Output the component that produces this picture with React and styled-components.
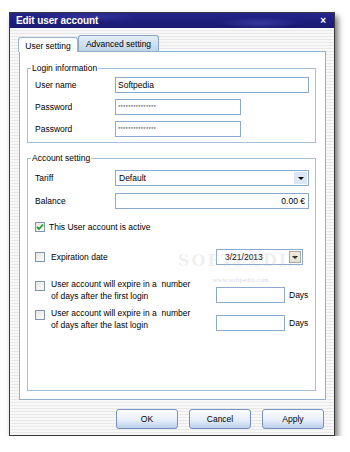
import React from 'react';
import styled, { createGlobalStyle } from 'styled-components';

const GlobalStyle = createGlobalStyle`
  body {
    margin: 0;
    background: #ffffff;
    font-family: 'Liberation Sans', Arial, sans-serif;
  }
`;

export default function App() {
  return (
    <>
      <GlobalStyle />
      <Page>
        <Window>
          <TitleBar>
            <Title>Edit user account</Title>
            <Close>×</Close>
          </TitleBar>
          <Body>
            <Tabs>
              <Tab $active>User setting</Tab>
              <Tab>Advanced setting</Tab>
            </Tabs>
            <Panel>
              <Group>
                <Legend>Login information</Legend>
                <Row>
                  <Label>User name</Label>
                  <Field $w={194}>Softpedia</Field>
                </Row>
                <Row>
                  <Label>Password</Label>
                  <Field $w={126} $secret>***************</Field>
                </Row>
                <Row>
                  <Label>Password</Label>
                  <Field $w={126} $secret>***************</Field>
                </Row>
              </Group>

              <Group $grow $mt={10}>
                <Legend>Account setting</Legend>
                <Row $mt={3}>
                  <Label>Tariff</Label>
                  <Select $w={194}>
                    <span>Default</span>
                    <DropButton $light>
                      <Arrow />
                    </DropButton>
                  </Select>
                </Row>
                <Row $mt={1}>
                  <Label>Balance</Label>
                  <Field $w={194} $right>0.00 €</Field>
                </Row>
                <Row $mt={4}>
                  <Check $checked>
                    <svg width="8" height="8" viewBox="0 0 8 8">
                      <path d="M1 4 L3 6 L7 1.5" fill="none" stroke="#22a022" strokeWidth="1.8" />
                    </svg>
                  </Check>
                  <CheckText $gap={4}>This User account is active</CheckText>
                </Row>
                <Row $mt={8}>
                  <Check />
                  <CheckText $gap={6} $w={165}>Expiration date</CheckText>
                  <Select $w={87} $pad={8}>
                    <span>3/21/2013</span>
                    <DropButton>
                      <Arrow />
                    </DropButton>
                  </Select>
                </Row>
                <MultiRow $mt={11}>
                  <Check $top={2} />
                  <CheckText $gap={6} $w={165} $multi>
                    User account will expire in a&nbsp; number
                    <br />
                    of days after the first login
                  </CheckText>
                  <Field $w={69} $top={8}>&nbsp;</Field>
                  <Unit $top={8}>Days</Unit>
                </MultiRow>
                <MultiRow $mt={5}>
                  <Check $top={2} />
                  <CheckText $gap={6} $w={165} $multi>
                    User account will expire in a&nbsp; number
                    <br />
                    of days after the last login
                  </CheckText>
                  <Field $w={69} $top={7}>&nbsp;</Field>
                  <Unit $top={7}>Days</Unit>
                </MultiRow>
              </Group>
            </Panel>
            <Buttons>
              <Button>OK</Button>
              <Button>Cancel</Button>
              <Button>Apply</Button>
            </Buttons>
          </Body>
          <Watermark>
            <Mark>SOFTPEDIA</Mark>
            <MarkUrl>www.softpedia.com</MarkUrl>
          </Watermark>
        </Window>
      </Page>
    </>
  );
}

const Page = styled.div`
  padding: 12px 0 0 9px;
`;

const Window = styled.div`
  position: relative;
  width: 324px;
  height: 422px;
  border: 1px solid #3a3a3a;
  box-shadow: 3px 4px 6px rgba(0, 0, 0, 0.55);
  display: flex;
  flex-direction: column;
  overflow: hidden;
`;

const TitleBar = styled.div`
  height: 15px;
  flex: none;
  display: flex;
  align-items: center;
  justify-content: space-between;
  padding: 0 6px;
  background:
    radial-gradient(ellipse 40px 6px at 250px 10px, rgba(80, 80, 190, 0.5), transparent),
    radial-gradient(ellipse 50px 5px at 80px 4px, rgba(70, 70, 180, 0.45), transparent),
    linear-gradient(#24248a, #1a1a72);
  color: #ffffff;
`;

const Title = styled.span`
  font-size: 10px;
  font-weight: bold;
  letter-spacing: -0.1px;
`;

const Close = styled.span`
  font-size: 10px;
  font-weight: bold;
  line-height: 1;
  margin-right: 2px;
`;

const Body = styled.div`
  flex: 1;
  display: flex;
  flex-direction: column;
  padding: 7px 8px 0 9px;
  background: repeating-linear-gradient(
    to bottom,
    #f8f8f8 0,
    #f8f8f8 2px,
    #e8e8e8 2px,
    #e8e8e8 3px
  );
  font-size: 8px;
  color: #000000;
`;

const Tabs = styled.div`
  display: flex;
  align-items: flex-end;
  margin: 0 0 -1px -1px;
  position: relative;
  z-index: 1;
`;

const Tab = styled.div`
  box-sizing: border-box;
  display: flex;
  align-items: center;
  justify-content: center;
  width: ${(p) => (p.$active ? 60 : 81)}px;
  height: ${(p) => (p.$active ? 15 : 16)}px;
  margin-bottom: ${(p) => (p.$active ? 0 : 1)}px;
  border: 1px solid ${(p) => (p.$active ? '#9fb6cf' : '#88a5c6')};
  border-bottom: 0;
  border-radius: 3px 3px 0 0;
  background: ${(p) =>
    p.$active ? 'linear-gradient(#fbfbfb, #ffffff)' : 'linear-gradient(#e4eef8, #bfd4ea)'};
  font-size: 8.5px;
  padding-top: 1px;
`;

const Panel = styled.div`
  box-sizing: border-box;
  height: 349px;
  flex: none;
  display: flex;
  flex-direction: column;
  padding: 11px 9px 8px 7px;
  background: #ffffff;
  border: 1px solid #90aed0;
`;

const Group = styled.fieldset`
  margin: ${(p) => p.$mt || 0}px 0 0;
  padding: 1px 7px 2px;
  border: 1px solid #a6c0dc;
  flex: ${(p) => (p.$grow ? 1 : 'none')};
  min-width: 0;
`;

const Legend = styled.legend`
  padding: 0 1px;
  margin-left: -4px;
  font-size: 8.5px;
  line-height: 10px;
`;

const Row = styled.div`
  display: flex;
  align-items: center;
  height: 22px;
  margin-top: ${(p) => p.$mt || 0}px;
`;

const MultiRow = styled.div`
  display: flex;
  align-items: flex-start;
  margin-top: ${(p) => p.$mt || 0}px;
`;

const Label = styled.span`
  width: 80px;
  flex: none;
  font-size: 8.5px;
`;

const Field = styled.div`
  box-sizing: border-box;
  width: ${(p) => p.$w}px;
  height: 16px;
  margin-top: ${(p) => p.$top || 0}px;
  flex: none;
  display: flex;
  align-items: center;
  justify-content: ${(p) => (p.$right ? 'flex-end' : 'flex-start')};
  padding: 0 3px 0 2px;
  border: 1px solid #8aaad0;
  background: #ffffff;
  font-size: ${(p) => (p.$secret ? '6px' : '8.5px')};
  color: ${(p) => (p.$secret ? '#555' : '#000')};
  letter-spacing: ${(p) => (p.$secret ? '0.2px' : '0')};
  overflow: hidden;
  white-space: nowrap;
`;

const Select = styled.div`
  box-sizing: border-box;
  width: ${(p) => p.$w}px;
  height: 16px;
  flex: none;
  display: flex;
  align-items: center;
  justify-content: space-between;
  padding: 1px 1px 1px ${(p) => p.$pad || 3}px;
  border: 1px solid #8aaad0;
  background: #ffffff;
  font-size: 8.5px;
`;

const DropButton = styled.div`
  box-sizing: border-box;
  width: ${(p) => (p.$light ? 13 : 12)}px;
  height: 100%;
  display: flex;
  align-items: center;
  justify-content: center;
  background: ${(p) => (p.$light ? '#dbe6f4' : '#ece9d8')};
  border: ${(p) => (p.$light ? '0' : '1px solid #a8a8a0')};
`;

const Arrow = styled.span`
  width: 0;
  height: 0;
  border-left: 3px solid transparent;
  border-right: 3px solid transparent;
  border-top: 3px solid #000000;
  margin-top: 1px;
`;

const Check = styled.div`
  box-sizing: border-box;
  width: 10px;
  height: 10px;
  flex: none;
  margin-top: ${(p) => p.$top || 0}px;
  border: 1px solid #7f95b3;
  background: linear-gradient(135deg, #e6e6e0, #fbfbfb);
  display: flex;
  align-items: center;
  justify-content: center;
`;

const CheckText = styled.div`
  margin-left: ${(p) => p.$gap}px;
  width: ${(p) => (p.$w ? `${p.$w}px` : 'auto')};
  flex: none;
  font-size: 8.5px;
  line-height: ${(p) => (p.$multi ? '11.5px' : 'normal')};
`;

const Unit = styled.span`
  margin: ${(p) => p.$top + 3}px 0 0 4px;
  font-size: 8.5px;
`;

const Buttons = styled.div`
  display: flex;
  justify-content: flex-end;
  gap: 11px;
  margin-top: 9px;
  padding-right: 2px;
`;

const Button = styled.div`
  box-sizing: border-box;
  width: 62px;
  height: 20px;
  display: flex;
  align-items: center;
  justify-content: center;
  border: 1px solid #7690c4;
  border-radius: 3px;
  background: linear-gradient(#fdfeff, #e6eef9 55%, #bccfec);
  font-size: 8.5px;
`;

const Watermark = styled.div`
  position: absolute;
  left: 168px;
  top: 238px;
  pointer-events: none;
  display: flex;
  flex-direction: column;
  align-items: center;
`;

const Mark = styled.span`
  font-family: 'DejaVu Serif', serif;
  font-size: 16px;
  font-weight: bold;
  letter-spacing: 2px;
  color: rgba(200, 200, 200, 0.28);
`;

const MarkUrl = styled.span`
  font-family: 'Liberation Serif', serif;
  font-size: 7px;
  margin-top: 6px;
  color: rgba(150, 150, 150, 0.4);
`;
